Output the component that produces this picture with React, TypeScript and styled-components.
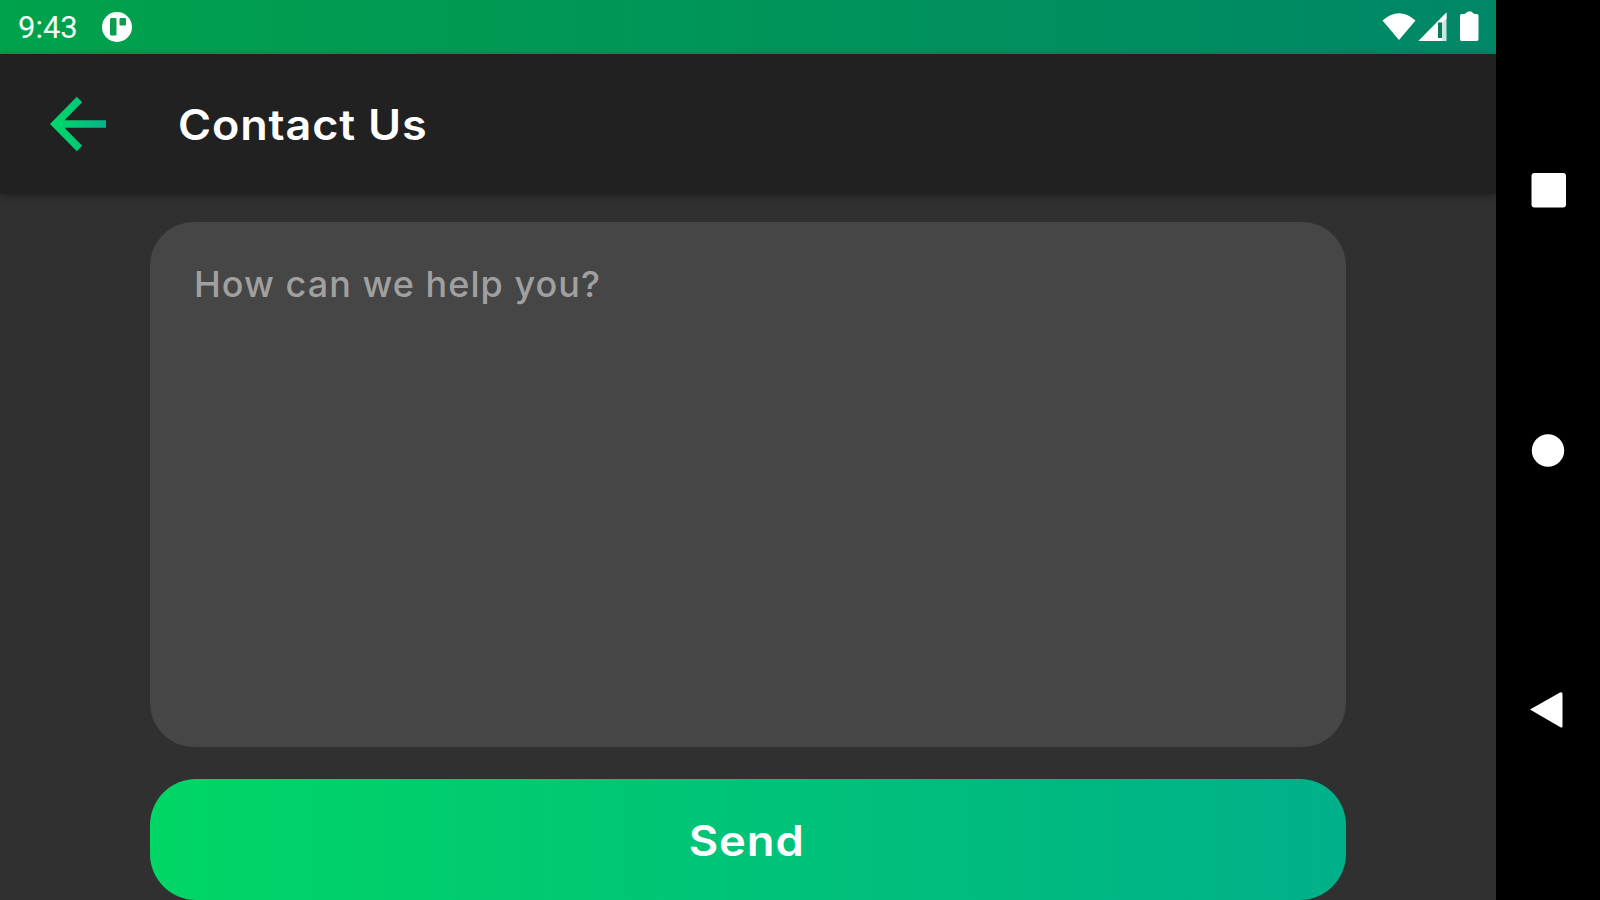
import React, { useState } from 'react';
import styled, { createGlobalStyle } from 'styled-components';

interface LabelProps {
    $size: number;
    $spacing?: number;
}

const GlobalStyle = createGlobalStyle`
    * {
        box-sizing: border-box;
    }

    body {
        margin: 0;
        overflow: hidden;
        background-color: #000000;
    }
`;

const Device = styled.div`
    display: flex;
    width: 1600px;
    height: 900px;
    overflow: hidden;
    background-color: #000000;
    font-family: Inter, "Open Sans", sans-serif;
`;

const Screen = styled.div`
    display: flex;
    flex-direction: column;
    width: 1496px;
    height: 900px;
    background-color: #303030;
`;

const StatusBar = styled.header`
    display: flex;
    flex: none;
    align-items: center;
    justify-content: space-between;
    height: 54px;
    padding: 0 16px 0 18px;
    background: linear-gradient(90deg, #00a24b, #008767);
`;

const StatusGroup = styled.div`
    display: flex;
    align-items: center;

    svg {
        display: block;
    }
`;

const Clock = styled.span`
    width: 83px;
    font-family: Roboto, sans-serif;
    font-size: 31px;
    line-height: 54px;
    padding-top: 1px;
    color: #f4fff8;
`;

const AppBar = styled.div`
    display: flex;
    flex: none;
    align-items: center;
    height: 140px;
    padding: 0 50px;
    background-color: #212121;
    box-shadow: 0 2px 7px rgba(0, 0, 0, 0.32);
`;

const BackButton = styled.button`
    width: 128px;
    height: 56px;
    padding: 0;
    border: 0;
    background: none;
    cursor: pointer;

    svg {
        display: block;
    }
`;

const Title = styled.h1<LabelProps>`
    margin: 2px 0 0;
    font-size: ${({ $size }) => $size}px;
    font-weight: 600;
    letter-spacing: ${({ $spacing = 0 }) => $spacing}px;
    line-height: 56px;
    color: #ffffff;
    transform: scaleX(1.07);
    transform-origin: left;
`;

const Form = styled.form`
    display: flex;
    flex: 1;
    flex-direction: column;
    gap: 32px;
    padding: 28px 150px 0;
`;

const Message = styled.textarea<LabelProps>`
    display: block;
    flex: none;
    width: 100%;
    height: 525px;
    padding: 39px 44px;
    border: 0;
    border-radius: 44px;
    outline: none;
    resize: none;
    background-color: #464646;
    font-family: inherit;
    font-size: ${({ $size }) => $size}px;
    font-weight: 500;
    letter-spacing: ${({ $spacing = 0 }) => $spacing}px;
    line-height: 46px;
    color: #ffffff;

    &::placeholder {
        color: #a0a0a0;
        opacity: 1;
    }
`;

const SendButton = styled.button<LabelProps>`
    flex: none;
    height: 121px;
    padding: 2px 2px 0 0;
    border: 0;
    border-radius: 46px;
    background: linear-gradient(90deg, #00d665, #00b08a);
    font-family: inherit;
    font-size: ${({ $size }) => $size}px;
    font-weight: 600;
    letter-spacing: ${({ $spacing = 0 }) => $spacing}px;
    color: #ffffff;
    cursor: pointer;
`;

const SendLabel = styled.span`
    display: inline-block;
    transform: scaleX(1.08);
`;

const NavBar = styled.nav`
    display: flex;
    flex: 1;
    flex-direction: column;
    align-items: center;
    justify-content: space-between;
    padding: 165px 0 165px;

    svg {
        display: block;
    }
`;

const ParkingIcon = () => (
    <svg width="32" height="32" viewBox="0 0 32 32">
        <circle cx="16" cy="16" r="15" fill="#ffffff" />
        <rect x="9" y="7" width="6.5" height="17.5" rx="1.2" fill="#0a9d4c" />
        <rect x="18.5" y="7" width="6.5" height="7.5" rx="1.2" fill="#0a9d4c" />
    </svg>
);

const StatusIcons = () => (
    <svg width="98" height="32" viewBox="0 0 98 32" fill="#ffffff">
        <path d="M0.500 9.500Q17 -5 33.500 9.500L17 29Z" />
        <path d="M36.500 30L64.500 1.500V30Z" opacity="0.8" />
        <path d="M36.500 30L64.500 1.500V7.500L60 11.500H56V27H60V30Z" />
        <path d="M56 11.500H60V27H56Z" fill="#0a7a5a" />
        <path d="M79.500 3H82.500L86 0.500H89L92.500 3H95Q96.500 3 96.500 5V28Q96.500 30 95 30H79.500Q78 30 78 28V5Q78 3 79.500 3Z" />
    </svg>
);

const BackArrow = () => (
    <svg width="56" height="56" viewBox="0 0 56 56" fill="none">
        <defs>
            <linearGradient id="arrow" gradientUnits="userSpaceOnUse" x1="0" y1="0" x2="56" y2="0">
                <stop offset="0" stopColor="#00d968" />
                <stop offset="1" stopColor="#08b488" />
            </linearGradient>
        </defs>
        <path d="M29.500 3.500L5.300 28L29.500 52.500M6 28H56.500" stroke="url(#arrow)" strokeWidth="7.5" />
    </svg>
);

const App = () => {
    const [message, setMessage] = useState('');

    const handleSubmit = (event: React.FormEvent<HTMLFormElement>) => {
        event.preventDefault();
        setMessage('');
    }

    return (
        <Device>
            <GlobalStyle />
            <Screen>
                <StatusBar>
                    <StatusGroup>
                        <Clock>9:43</Clock>
                        <ParkingIcon />
                    </StatusGroup>
                    <StatusGroup>
                        <StatusIcons />
                    </StatusGroup>
                </StatusBar>
                <AppBar>
                    <BackButton type="button"><BackArrow /></BackButton>
                    <Title $size={42} $spacing={0.8}>Contact Us</Title>
                </AppBar>
                <Form onSubmit={handleSubmit}>
                    <Message
                        $size={36}
                        $spacing={1.03}
                        placeholder="How can we help you?"
                        value={message}
                        onChange={event => setMessage(event.target.value)}
                    />
                    <SendButton type="submit" $size={42} $spacing={0.8}>
                        <SendLabel>Send</SendLabel>
                    </SendButton>
                </Form>
            </Screen>
            <NavBar>
                <svg width="50" height="50" viewBox="0 0 50 50" fill="#ffffff">
                    <rect x="8.500" y="8" width="34.500" height="34.500" rx="3" />
                </svg>
                <svg width="50" height="50" viewBox="0 0 50 50" fill="#ffffff">
                    <circle cx="25" cy="25.500" r="16.200" />
                </svg>
                <svg width="50" height="50" viewBox="0 0 50 50" fill="#ffffff">
                    <path d="M7 24.500L37 7.500Q39.500 6.500 39.500 9V41Q39.500 43.500 37 42Z" />
                </svg>
            </NavBar>
        </Device>
    )
}

export default App;
